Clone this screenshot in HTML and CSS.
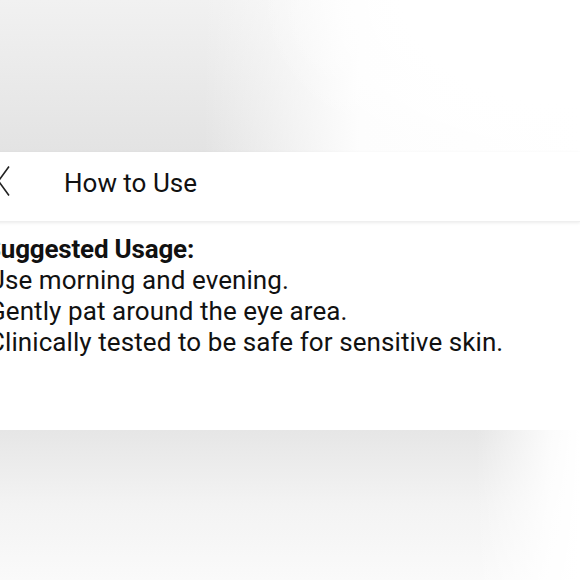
FILE: index.html
```html
<!DOCTYPE html>
<html lang="en">
<head>
<meta charset="utf-8">
<title>How to Use</title>
<link rel="stylesheet" href="styles.css">
</head>
<body>
<div class="backdrop-top"></div>
<main class="sheet">
  <header class="sheet-header">
    <button class="back" aria-label="Back">
      <svg width="14" height="34" viewBox="0 0 14 34"><path d="M12 1.5 L1.5 16 L12 30.5" fill="none" stroke="#222" stroke-width="1.6"/></svg>
    </button>
    <h1 class="title">How to Use</h1>
  </header>
  <section class="sheet-body">
    <p class="heading">Suggested Usage:</p>
    <p class="line">Use morning and evening.</p>
    <p class="line">Gently pat around the eye area.</p>
    <p class="line">Clinically tested to be safe for sensitive skin.</p>
  </section>
</main>
<div class="backdrop-bottom"></div>
</body>
</html>
```
FILE: styles.css
```css
html, body {
  margin: 0;
  padding: 0;
}
body {
  width: 580px;
  height: 580px;
  overflow: hidden;
  background: #f2f2f2;
  font-family: Roboto, "Noto Sans", sans-serif;
  color: #111;
  display: flex;
  flex-direction: column;
}
.backdrop-top {
  height: 152px;
  flex: none;
  background:
    radial-gradient(ellipse 320px 190px at 100% 0%, #ffffff 55%, rgba(255,255,255,0) 100%),
    linear-gradient(to right, rgba(255,255,255,0) 0%, rgba(255,255,255,0) 35%, #fdfdfd 62%, #ffffff 100%),
    linear-gradient(to bottom, #f1f1f1 0%, #e3e3e3 100%);
}
.sheet {
  flex: none;
  height: 278px;
  margin-left: -12px;
  width: 592px;
  background: #fff;
  display: flex;
  flex-direction: column;
}
.sheet-header {
  height: 70px;
  flex: none;
  display: flex;
  align-items: flex-start;
  box-shadow: 0 1px 3px rgba(0,0,0,0.08);
  border-bottom: 1px solid #efefef;
  box-sizing: border-box;
}
.back {
  border: 0;
  background: none;
  padding: 0;
  margin: 13px 0 0 9px;
  width: 14px;
  height: 34px;
  display: block;
}
.back svg { display: block; }
.title {
  margin: 18px 0 0 53px;
  font-size: 26px;
  line-height: 26px;
  font-weight: 400;
  color: #111;
}
.sheet-body {
  padding: 12px 0 0 0;
}
.sheet-body p {
  margin: 0;
  font-size: 26px;
  line-height: 31px;
}
.line {
  letter-spacing: 0.08px;
}
.heading {
  font-weight: 700;
  margin-left: -3px !important;
  letter-spacing: -0.2px;
}
.backdrop-bottom {
  flex: 1;
  background:
    linear-gradient(to right, rgba(255,255,255,0) 0%, rgba(255,255,255,0) 82%, rgba(255,255,255,0.85) 95%, #ffffff 100%),
    linear-gradient(to bottom, #e6e6e6 0%, #f3f3f3 50%, #fafafa 100%);
}
```
